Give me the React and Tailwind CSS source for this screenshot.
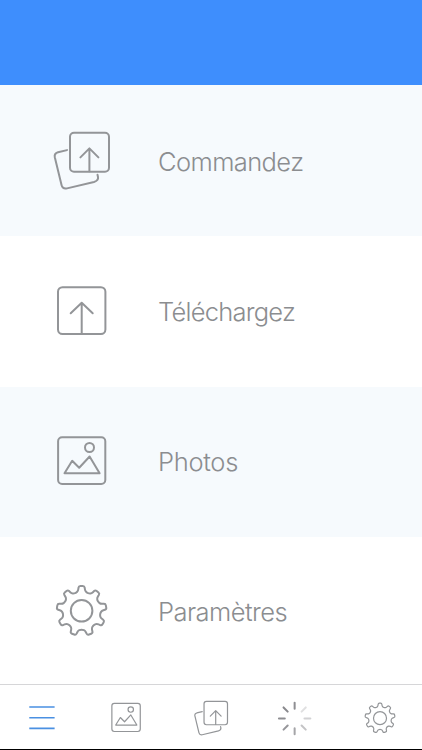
import React, { useState } from "react";

// Closed outline of a cog: each tooth is a small polygon with softened corners
function gearPath(cx, cy, teeth) {
  const profile = [
    [-16.5, 18.9],
    [-10, 20.2],
    [-6.6, 25],
    [6.6, 25],
    [10, 20.2],
    [16.5, 18.9],
  ];
  const points = [];
  for (let i = 0; i < teeth; i++) {
    profile.forEach(([deg, r]) => {
      const a = ((deg + (i * 360) / teeth) * Math.PI) / 180;
      points.push([cx + r * Math.sin(a), cy - r * Math.cos(a)]);
    });
  }
  const mid = (a, b) => {
    const len = Math.hypot(b[0] - a[0], b[1] - a[1]);
    const t = Math.min(0.5, 1.7 / len);
    return [a[0] + (b[0] - a[0]) * t, a[1] + (b[1] - a[1]) * t];
  };
  const fmt = (p) => `${p[0].toFixed(2)} ${p[1].toFixed(2)}`;
  return (
    points
      .map((p, i) => {
        const prev = points[(i + points.length - 1) % points.length];
        const next = points[(i + 1) % points.length];
        return `${i === 0 ? "M" : "L"}${fmt(mid(p, prev))}Q${fmt(p)} ${fmt(mid(p, next))}`;
      })
      .join("") + "Z"
  );
}

const GEAR = gearPath(31.6, 31.8, 9);

function Icon({ className, children }) {
  return (
    <svg
      viewBox="0 0 64 64"
      className={className}
      fill="none"
      stroke="currentColor"
      strokeWidth="2"
      strokeLinecap="round"
      strokeLinejoin="round"
    >
      {children}
    </svg>
  );
}

function OrderIcon({ className }) {
  return (
    <Icon className={className}>
      <rect x="20" y="3.8" width="39" height="39" rx="4" />
      <path d="M39.4 42.3V19.4M30.4 28.4L39.4 19.4L48.4 28.4" />
      <path d="M17 21.1L8 23.2Q4 24.4 4.8 28.2L11.6 56.2Q12.8 60.4 17 59.4L44 53Q48.6 51.6 48 48L47.5 45.8" />
    </Icon>
  );
}

function UploadIcon({ className }) {
  return (
    <Icon className={className}>
      <rect x="8" y="7.2" width="47.4" height="46.8" rx="4.5" />
      <path d="M31.7 53.5V22.8M20.7 33.3L31.7 22.8L42.7 33.3" />
    </Icon>
  );
}

function PhotoIcon({ className }) {
  return (
    <Icon className={className}>
      <rect x="8.1" y="7.3" width="47.2" height="46.7" rx="4" />
      <circle cx="39.5" cy="17.5" r="4.5" />
      <path d="M14.5 43.3L22.2 30.8L29.2 37.8L39.6 26.5L49.6 43.3Z" />
    </Icon>
  );
}

function GearIcon({ className }) {
  return (
    <Icon className={className}>
      <path d={GEAR} />
      <circle cx="31.6" cy="31.8" r="10.8" />
    </Icon>
  );
}

function MenuIcon({ className }) {
  return (
    <svg viewBox="0 0 38 38" className={className} stroke="#4a90e2" strokeWidth="1.5">
      <path d="M6.2 8H31.2M6.2 18.5H31.2M6.2 29H31.2" />
    </svg>
  );
}

// Clockwise from the top, fading towards the upper right
const rays = [
  { angle: 0, color: "#8f8f93" },
  { angle: 45, color: "#e0e0e1" },
  { angle: 90, color: "#d2d2d4" },
  { angle: 135, color: "#c4c4c6" },
  { angle: 180, color: "#a5a5a8" },
  { angle: 225, color: "#96969a" },
  { angle: 270, color: "#8e8e92" },
  { angle: 315, color: "#88888c" },
];

function SpinnerIcon({ className }) {
  return (
    <svg viewBox="0 0 38 38" className={className} strokeWidth="2" strokeLinecap="round">
      {rays.map(({ angle, color }) => (
        <path key={angle} d="M18.4 3.8V9.6" stroke={color} transform={`rotate(${angle} 18.4 19.3)`} />
      ))}
    </svg>
  );
}

const menuItems = [
  {
    label: "Commandez",
    icon: OrderIcon,
    className: "h-[151px] bg-[#f6fafd]",
    textClass: "pt-[3px] tracking-[-0.6px]",
  },
  {
    label: "Téléchargez",
    icon: UploadIcon,
    className: "h-[151px] bg-white",
    textClass: "pt-px tracking-[-0.75px]",
  },
  {
    label: "Photos",
    icon: PhotoIcon,
    className: "h-[150px] bg-[#f6fafd]",
    textClass: "tracking-[-0.3px]",
  },
  {
    label: "Paramètres",
    icon: GearIcon,
    className: "h-[147px] bg-white",
    textClass: "pt-[3px] tracking-[-0.55px]",
  },
];

const tabs = [
  { label: "Menu", icon: MenuIcon },
  { label: "Photos", icon: PhotoIcon },
  { label: "Commandez", icon: OrderIcon },
  { label: "Chargement", icon: SpinnerIcon },
  { label: "Paramètres", icon: GearIcon },
];

export default function App() {
  const [activeTab, setActiveTab] = useState(0);

  return (
    <div className="flex h-[750px] w-[422px] flex-col overflow-hidden bg-white font-['Inter','Liberation_Sans',sans-serif] text-[#939598]">
      <header className="h-[85px] shrink-0 bg-[#3e8efd]" />

      <main className="shrink-0">
        {menuItems.map(({ label, icon: ItemIcon, className, textClass }) => (
          <div key={label} className={`flex items-center pl-[50px] ${className}`}>
            <ItemIcon className="size-16 shrink-0" />
            <span
              className={`ml-11 text-[25.5px] leading-8 font-light text-[#8b8d90] ${textClass}`}
            >
              {label}
            </span>
          </div>
        ))}
      </main>

      <nav className="grid h-[66px] shrink-0 grid-cols-5 border-t border-b border-t-[#d6d6d8] border-b-black pt-[3px]">
        {tabs.map(({ label, icon: TabIcon }, index) => (
          <button
            key={label}
            aria-label={label}
            aria-current={index === activeTab}
            onClick={() => setActiveTab(index)}
            className="flex items-center justify-center"
          >
            <TabIcon className="size-[38.5px]" />
          </button>
        ))}
      </nav>
    </div>
  );
}
